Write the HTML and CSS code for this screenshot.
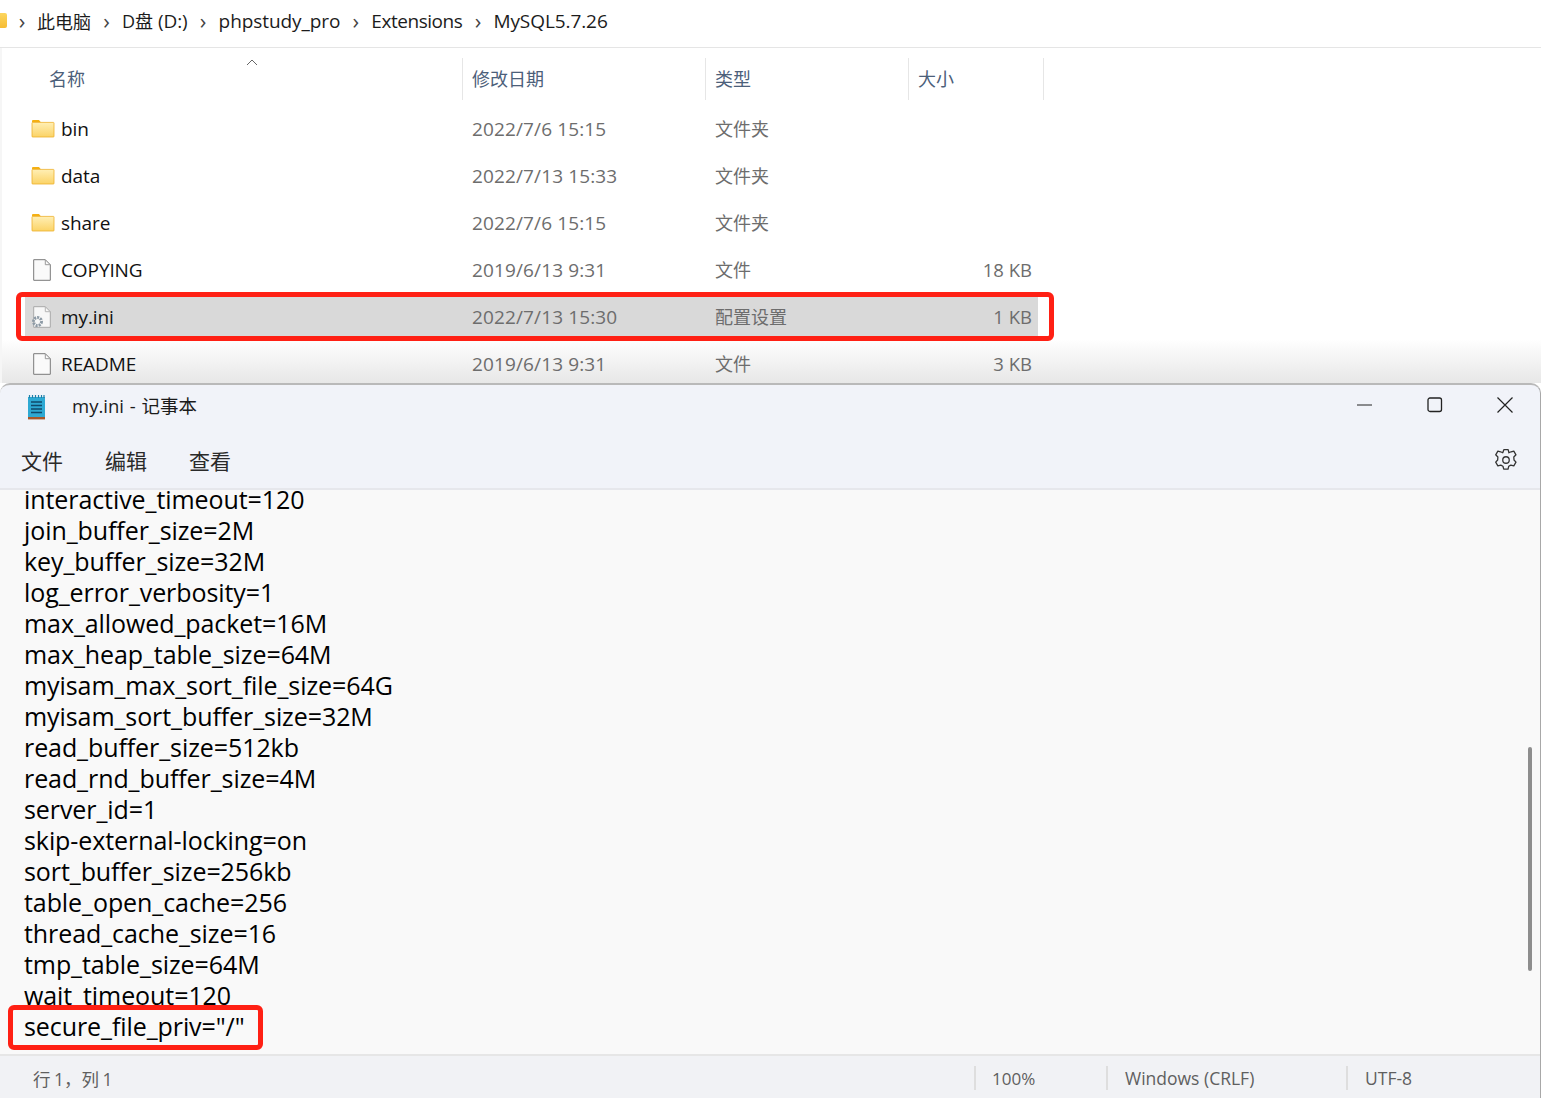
FILE: index.html
```html
<!DOCTYPE html>
<html lang="zh">
<head>
<meta charset="utf-8">
<title>my.ini - 记事本</title>
<link rel="stylesheet" href="styles.css">
</head>
<body>
<svg class="defs" width="0" height="0" aria-hidden="true">
  <defs>
    <linearGradient id="fg" x1="0" y1="0" x2="0" y2="1"><stop offset="0" stop-color="#ffefb5"/><stop offset="1" stop-color="#fbd366"/></linearGradient>
    <symbol id="folder" viewBox="0 0 24 19">
      <path d="M1 2a1 1 0 0 1 1-1h6l2 2.400H1z" fill="#f5b013"/>
      <rect x="1" y="3.400" width="22" height="14.600" rx=".6" fill="url(#fg)" stroke="#eeb02c" stroke-width=".8"/>
    </symbol>
    <symbol id="file" viewBox="0 0 18 22">
      <path d="M.7.7h11.600l5 5v15.600H.7z" fill="#fafafa" stroke="#7a7a7a" stroke-width="1"/>
      <path d="M12.300.7v5h5" fill="none" stroke="#9a9a9a" stroke-width="1"/>
    </symbol>
  </defs>
</svg>
<div class="explorer">
  <nav class="crumbs">
    <span class="crumb-folder"></span>
    <span class="sep first">›</span><span class="cjk">此电脑</span>
    <span class="sep">›</span><span><span class="cjk">D盘</span> (D:)</span>
    <span class="sep">›</span><span>phpstudy_pro</span>
    <span class="sep">›</span><span class="tight">Extensions</span>
    <span class="sep">›</span><span>MySQL5.7.26</span>
  </nav>
  <div class="list">
    <div class="head">
      <div class="hc c-name">名称<svg class="sort" width="12" height="7" viewBox="0 0 12 7"><path d="M1 6l5-5 5 5" fill="none" stroke="#666" stroke-width="1"/></svg></div>
      <div class="hc c-date">修改日期</div>
      <div class="hc c-type">类型</div>
      <div class="hc c-size">大小</div>
    </div>
    <div class="row"><div class="c-name name"><svg class="ic-folder"><use href="#folder"/></svg>bin</div><div class="c-date">2022/7/6 15:15</div><div class="c-type">文件夹</div><div class="c-size"></div></div>
    <div class="row"><div class="c-name name"><svg class="ic-folder"><use href="#folder"/></svg>data</div><div class="c-date">2022/7/13 15:33</div><div class="c-type">文件夹</div><div class="c-size"></div></div>
    <div class="row"><div class="c-name name"><svg class="ic-folder"><use href="#folder"/></svg>share</div><div class="c-date">2022/7/6 15:15</div><div class="c-type">文件夹</div><div class="c-size"></div></div>
    <div class="row"><div class="c-name name"><svg class="ic-file"><use href="#file"/></svg>COPYING</div><div class="c-date">2019/6/13 9:31</div><div class="c-type">文件</div><div class="c-size">18 KB</div></div>
    <div class="row selected">
      <div class="c-name name"><svg class="ic-file ic-ini" viewBox="0 0 18 22"><path d="M.7.7h11.600l5 5v15.600H.7z" fill="#f7f7f7" stroke="#a9a9a9" stroke-width="1"/><path d="M12.300.7v5h5" fill="none" stroke="#b5b5b5" stroke-width="1"/></svg><svg class="gear-mini" width="13" height="13" viewBox="0 0 13 13"><circle cx="6.500" cy="6.500" r="4" fill="none" stroke="#8d9aa5" stroke-width="3" stroke-dasharray="2 1"/></svg>my.ini</div>
      <div class="c-date">2022/7/13 15:30</div><div class="c-type">配置设置</div><div class="c-size">1 KB</div>
    </div>
    <div class="row"><div class="c-name name"><svg class="ic-file"><use href="#file"/></svg>README</div><div class="c-date">2019/6/13 9:31</div><div class="c-type">文件</div><div class="c-size">3 KB</div></div>
    <div class="mark mark-row"></div>
  </div>
  <div class="fade"></div>
</div>
<div class="notepad">
  <div class="titlebar">
    <svg class="np-icon" width="19" height="25" viewBox="0 0 19 25">
      <rect x="1" y="2" width="17" height="20" fill="#2ea9d3"/>
      <rect x="1" y="22" width="17" height="2.400" fill="#a8572a"/>
      <path d="M2.500 0v3M5.500 0v3M8.500 0v3M11.500 0v3M14.500 0v3M17 0v3" stroke="#1f7fa8" stroke-width="1.200"/>
      <path d="M4 7h11M4 10.500h11M4 14h11M4 17.500h11" stroke="#0f4a6b" stroke-width="1.500"/>
    </svg>
    <span class="np-title">my.ini - 记事本</span>
    <div class="winbtns">
      <svg width="16" height="16" viewBox="0 0 16 16"><path d="M0 8h15" stroke="#222" stroke-width="1"/></svg>
      <svg width="16" height="16" viewBox="0 0 16 16"><rect x="1" y="1" width="13.500" height="13.500" rx="2" fill="none" stroke="#222" stroke-width="1.300"/></svg>
      <svg width="16" height="16" viewBox="0 0 16 16"><path d="M.5.500l15 15M15.500.500l-15 15" stroke="#222" stroke-width="1.200"/></svg>
    </div>
  </div>
  <div class="menubar">
    <span>文件</span><span>编辑</span><span>查看</span>
    <svg class="settings" width="26" height="26" viewBox="0 0 24 24" fill="none" stroke="#333" stroke-width="1.200" stroke-linejoin="round"><path d="M10 2.500h4l.7 2.800 2-.9 2.500-.6 2 3.400-2 2 .2 2.800 1.800 2-2 3.400-2.700-.7-2 1.100-.6 2.700h-4l-.7-2.700-2-1.100-2.700.7-2-3.400 1.800-2 .2-2.800-2-2 2-3.400 2.500.6 2 .9z"/><circle cx="12" cy="12" r="3"/></svg>
  </div>
  <div class="editor">
    <pre class="text">interactive_timeout=120
join_buffer_size=2M
key_buffer_size=32M
log_error_verbosity=1
max_allowed_packet=16M
max_heap_table_size=64M
myisam_max_sort_file_size=64G
myisam_sort_buffer_size=32M
read_buffer_size=512kb
read_rnd_buffer_size=4M
server_id=1
skip-external-locking=on
sort_buffer_size=256kb
table_open_cache=256
thread_cache_size=16
tmp_table_size=64M
wait_timeout=120
secure_file_priv="/"</pre>
    <div class="mark mark-line"></div>
    <div class="scrollthumb"></div>
  </div>
  <div class="status">
    <span class="st-pos">行 1，列 1</span>
    <span class="st st-zoom">100%</span>
    <span class="st st-eol">Windows (CRLF)</span>
    <span class="st st-enc">UTF-8</span>
  </div>
</div>
</body>
</html>
```
FILE: styles.css
```css
html, body { margin: 0; padding: 0; }
body {
  width: 1541px;
  height: 1098px;
  overflow: hidden;
  background: #fff;
  font-family: "Open Sans", "Noto Sans CJK SC", sans-serif;
  display: flex;
  flex-direction: column;
}
.defs { position: absolute; }

.explorer { position: relative; height: 383px; overflow: hidden; flex: none; }
.crumbs {
  height: 41px;
  padding-bottom: 6px;
  border-bottom: 1px solid #e5e5e5;
  display: flex;
  align-items: center;
  font-size: 19px;
  color: #1c1c1c;
  letter-spacing: -.08px;
}
.cjk { font-size: 18px; letter-spacing: 0; }
.tight { letter-spacing: -.45px; }
.crumb-folder { width: 7px; height: 15px; background: linear-gradient(#fcd65f, #f6bc33); border-radius: 0 2px 2px 0; }
.sep { width: 31px; padding-bottom: 2px; text-align: center; color: #444; font-size: 22px; line-height: 20px; }
.sep.first { width: 30px; }

.list { position: relative; z-index: 1; padding-top: 10px; font-size: 18px; box-shadow: inset 2px 0 #f6f6f6; }
.head { display: flex; height: 42px; margin-bottom: 5px; color: #4c607a; }
.hc { position: relative; display: flex; align-items: center; border-right: 1px solid #e6e6e6; box-sizing: border-box; padding-bottom: 2px; }
.head .c-name { padding-left: 49px; }
.sort { position: absolute; left: 246px; top: 1px; }
.row { display: flex; height: 47px; align-items: center; color: #6d6d6d; position: relative; }
.c-name { width: 463px; flex: none; box-sizing: border-box; }
.c-date { width: 243px; flex: none; box-sizing: border-box; padding-left: 9px; }
.c-type { width: 203px; flex: none; box-sizing: border-box; padding-left: 9px; }
.row .c-type { padding-bottom: 2px; }
.c-size { width: 135px; flex: none; box-sizing: border-box; padding-right: 12px; text-align: right; font-size: 18.500px; }
.head .c-size { text-align: left; padding-left: 9px; font-size: 18px; }
.row .c-date { font-size: 19px; letter-spacing: .13px; }
.name { color: #111; display: flex; align-items: center; padding-left: 61px; position: relative; font-size: 19px; letter-spacing: -.1px; }
.ic-folder { position: absolute; left: 31px; top: 50%; margin-top: -10px; width: 24px; height: 19px; }
.ic-file { position: absolute; left: 33px; top: 50%; margin-top: -11px; width: 18px; height: 22px; }
.gear-mini { position: absolute; left: 31px; top: 50%; margin-top: -2px; }
.selected { z-index: 0; }
.selected::before { content: ""; position: absolute; z-index: -1; left: 25px; top: 3px; width: 1013px; height: 41px; background: #d9d9d9; }
.mark { position: absolute; border: 5px solid #ff2014; border-radius: 6px; box-sizing: border-box; pointer-events: none; }
.mark-row { left: 16px; top: 244px; width: 1038px; height: 49px; }
.fade { position: absolute; left: 0; right: 0; bottom: 0; height: 44px; background: linear-gradient(to bottom, rgba(225,225,225,0), rgba(215,215,215,.6)); pointer-events: none; }

.notepad {
  flex: 1;
  min-height: 0;
  display: flex;
  flex-direction: column;
  background: #f1f3f9;
  border-top: 2px solid #b9b9b9;
  border-right: 1px solid #a8a8a8;
  border-radius: 10px 10px 0 0;
  box-sizing: border-box;
  position: relative;
  color: #1b1b1b;
}
.titlebar { height: 44px; padding-bottom: 4px; box-sizing: border-box; display: flex; align-items: center; flex: none; position: relative; }
.np-icon { margin-left: 27px; margin-top: 4px; }
.np-title { margin-left: 26px; font-size: 18.500px; word-spacing: 1px; }
.winbtns { margin-left: auto; display: flex; gap: 54px; margin-right: 27px; margin-bottom: 1px; }
.menubar { height: 61px; flex: none; display: flex; align-items: center; gap: 42px; padding-left: 21px; padding-top: 2px; box-sizing: border-box; font-size: 21px; position: relative; border-bottom: 2px solid #e6e7ec; color: #2a2a2a; }
.settings { position: absolute; right: 21px; top: 18px; }
.editor { height: 566px; flex: none; background: #f9f9f9; position: relative; border-bottom: 2px solid #e6e6e6; box-sizing: border-box; }
.text { margin: -6px 0 0; padding-left: 24px; font-family: "Open Sans", sans-serif; font-size: 25px; line-height: 31px; color: #000; letter-spacing: -.08px; }
.mark-line { left: 8px; top: 515px; width: 255px; height: 45px; }
.scrollthumb { position: absolute; right: 8px; top: 257px; width: 4px; height: 224px; border-radius: 2px; background: #8e8e8e; }
.status { flex: 1; min-height: 0; display: flex; align-items: center; background: #f1f2f5; font-size: 17.500px; color: #5f5f5f; padding-top: 2px; box-sizing: border-box; }
.st-pos { margin-left: 33px; width: 941px; flex: none; word-spacing: -1px; }
.st { display: flex; align-items: center; height: 24px; border-left: 2px solid #dedede; padding-left: 16px; box-sizing: border-box; flex: none; }
.st-zoom { width: 132px; font-size: 17px; }
.st-eol { width: 240px; padding-left: 17px; }
.st-enc { width: 120px; padding-left: 17px; }
```
